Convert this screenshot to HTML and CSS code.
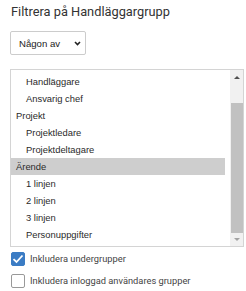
FILE: index.html
```html
<!DOCTYPE html>
<html lang="sv">
<head>
    <meta charset="UTF-8">
    <title>Filtrera på Handläggargrupp</title>
    <link rel="stylesheet" href="styles.css">
</head>
<body>
    <div class="filter">
        <h3 class="filter-title">Filtrera på Handläggargrupp</h3>

        <div class="select">
            <span>Någon av</span>
            <svg class="chevron" width="7" height="5" viewBox="0 0 7 5">
                <path d="M1 1 L3.5 3.5 L6 1" fill="none" stroke="#222" stroke-width="1.6"/>
            </svg>
        </div>

        <div class="listbox">
            <ul class="options">
                <li class="option sub">Handläggare</li>
                <li class="option sub">Ansvarig chef</li>
                <li class="option">Projekt</li>
                <li class="option sub">Projektledare</li>
                <li class="option sub">Projektdeltagare</li>
                <li class="option selected">Ärende</li>
                <li class="option sub">1 linjen</li>
                <li class="option sub">2 linjen</li>
                <li class="option sub">3 linjen</li>
                <li class="option sub">Personuppgifter</li>
            </ul>
            <div class="scrollbar">
                <div class="arrow up"></div>
                <div class="thumb"></div>
                <div class="arrow down"></div>
            </div>
        </div>

        <label class="check-row">
            <span class="box checked">
                <svg width="12" height="10" viewBox="0 0 12 10">
                    <path d="M1.5 5.2 L4.5 8 L10.5 1.5" fill="none" stroke="#fff" stroke-width="1.8"/>
                </svg>
            </span>
            Inkludera undergrupper
        </label>
        <label class="check-row">
            <span class="box"></span>
            Inkludera inloggad användares grupper
        </label>
    </div>
</body>
</html>
```

FILE: styles.css
```css
body {
    margin: 0;
    padding: 0;
    background-color: #fff;
    font-family: Roboto, Arial, sans-serif;
}

.filter {
    padding: 4px 2px 0 10px;
}

.filter-title {
    margin: 0;
    font-size: 12.8px;
    font-weight: normal;
    line-height: 16px;
    color: #333;
    padding-left: 1px;
}

.select {
    margin-top: 11px;
    width: 76px;
    height: 24px;
    box-sizing: border-box;
    border: 1px solid #ccc;
    border-radius: 2px;
    display: flex;
    align-items: center;
    justify-content: space-between;
    padding: 0 4px 0 8px;
    font-family: "Liberation Sans", Arial, sans-serif;
    font-size: 9.6px;
    color: #222;
}

.chevron {
    display: block;
}

.listbox {
    margin-top: 14px;
    height: 178px;
    box-sizing: border-box;
    border: 1px solid #d4d4d4;
    display: flex;
}

.options {
    list-style: none;
    margin: 0;
    padding: 3px 0;
    flex: 1;
    font-family: "Liberation Sans", Arial, sans-serif;
    font-size: 9.4px;
    color: #2a2a2a;
}

.option {
    height: 17px;
    line-height: 17px;
    padding-left: 5px;
    white-space: nowrap;
}

.option.sub {
    padding-left: 15px;
}

.option.selected {
    background-color: #cecece;
}

.scrollbar {
    width: 13px;
    margin-left: 5px;
    background-color: #f1f1f1;
    display: flex;
    flex-direction: column;
    align-items: center;
}

.arrow {
    width: 0;
    height: 0;
    border-left: 3px solid transparent;
    border-right: 3px solid transparent;
}

.arrow.up {
    margin-top: 6px;
    border-bottom: 3px solid #505050;
}

.thumb {
    width: 12px;
    height: 130px;
    margin-top: 24px;
    background-color: #c1c1c1;
}

.arrow.down {
    margin-top: 5px;
    border-top: 3px solid #a3a3a3;
}

.check-row {
    display: flex;
    align-items: center;
    margin-top: 4px;
    height: 15px;
    font-size: 9.3px;
    color: #444;
}

.check-row + .check-row {
    margin-top: 7px;
}

.box {
    width: 14px;
    height: 14px;
    box-sizing: border-box;
    border: 1px solid #999;
    border-radius: 2px;
    margin-right: 5px;
    margin-left: 1px;
    display: flex;
    align-items: center;
    justify-content: center;
    background-color: #fff;
}

.box.checked {
    background-color: #3b7cc4;
    border-color: #3b7cc4;
}

.box svg {
    display: block;
}
```
